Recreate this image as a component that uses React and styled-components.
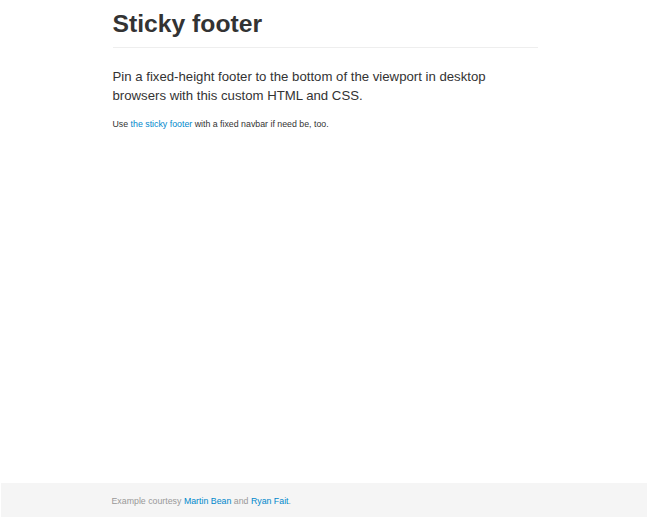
import React from "react";
import styled, { createGlobalStyle } from "styled-components";

const GlobalStyle = createGlobalStyle`
  html, body {
    margin: 0;
    padding: 0;
    height: 100%;
    background: #ffffff;
  }
  body {
    font-family: "Liberation Sans", Arial, Helvetica, sans-serif;
    color: #333333;
  }
  #root {
    min-height: 100%;
  }
`;

const Wrap = styled.div`
  min-height: 100vh;
  display: flex;
  flex-direction: column;
`;

const Main = styled.main`
  flex: 1;
`;

const Container = styled.div`
  width: 425px;
  margin: 0 auto;
`;

const PageHeader = styled.div`
  padding-top: 10px;
  padding-bottom: 10px;
  border-bottom: 1px solid #eeeeee;
`;

const Title = styled.h1`
  margin: 0;
  font-size: 24.7px;
  line-height: 27px;
  font-weight: bold;
  color: #333333;
`;

const Lead = styled.p`
  margin: 18.6px 0 0;
  font-size: 13.2px;
  line-height: 19px;
  font-weight: 300;
  color: #333333;
`;

const Text = styled.p`
  margin: 13.5px 0 0;
  font-size: 8.8px;
  line-height: 13px;
  color: ${(p) => (p.$muted ? "#999999" : "#333333")};
`;

const Link = styled.a`
  color: #0088cc;
  text-decoration: none;
`;

const Footer = styled.footer`
  height: 34px;
  margin: 0 3px 1px 1px;
  background: #f5f5f5;
  box-sizing: border-box;
  padding-top: 12px;
`;

const FooterText = styled(Text)`
  margin: 0;
`;

export default function App() {
  return (
    <>
      <GlobalStyle />
      <Wrap>
        <Main>
          <Container>
            <PageHeader>
              <Title>Sticky footer</Title>
            </PageHeader>
            <Lead>
              Pin a fixed-height footer to the bottom of the viewport in desktop
              browsers with this custom HTML and CSS.
            </Lead>
            <Text>
              Use <Link href="#">the sticky footer</Link> with a fixed navbar if
              need be, too.
            </Text>
          </Container>
        </Main>
        <Footer>
          <Container>
            <FooterText $muted>
              Example courtesy <Link href="#">Martin Bean</Link> and{" "}
              <Link href="#">Ryan Fait</Link>.
            </FooterText>
          </Container>
        </Footer>
      </Wrap>
    </>
  );
}
